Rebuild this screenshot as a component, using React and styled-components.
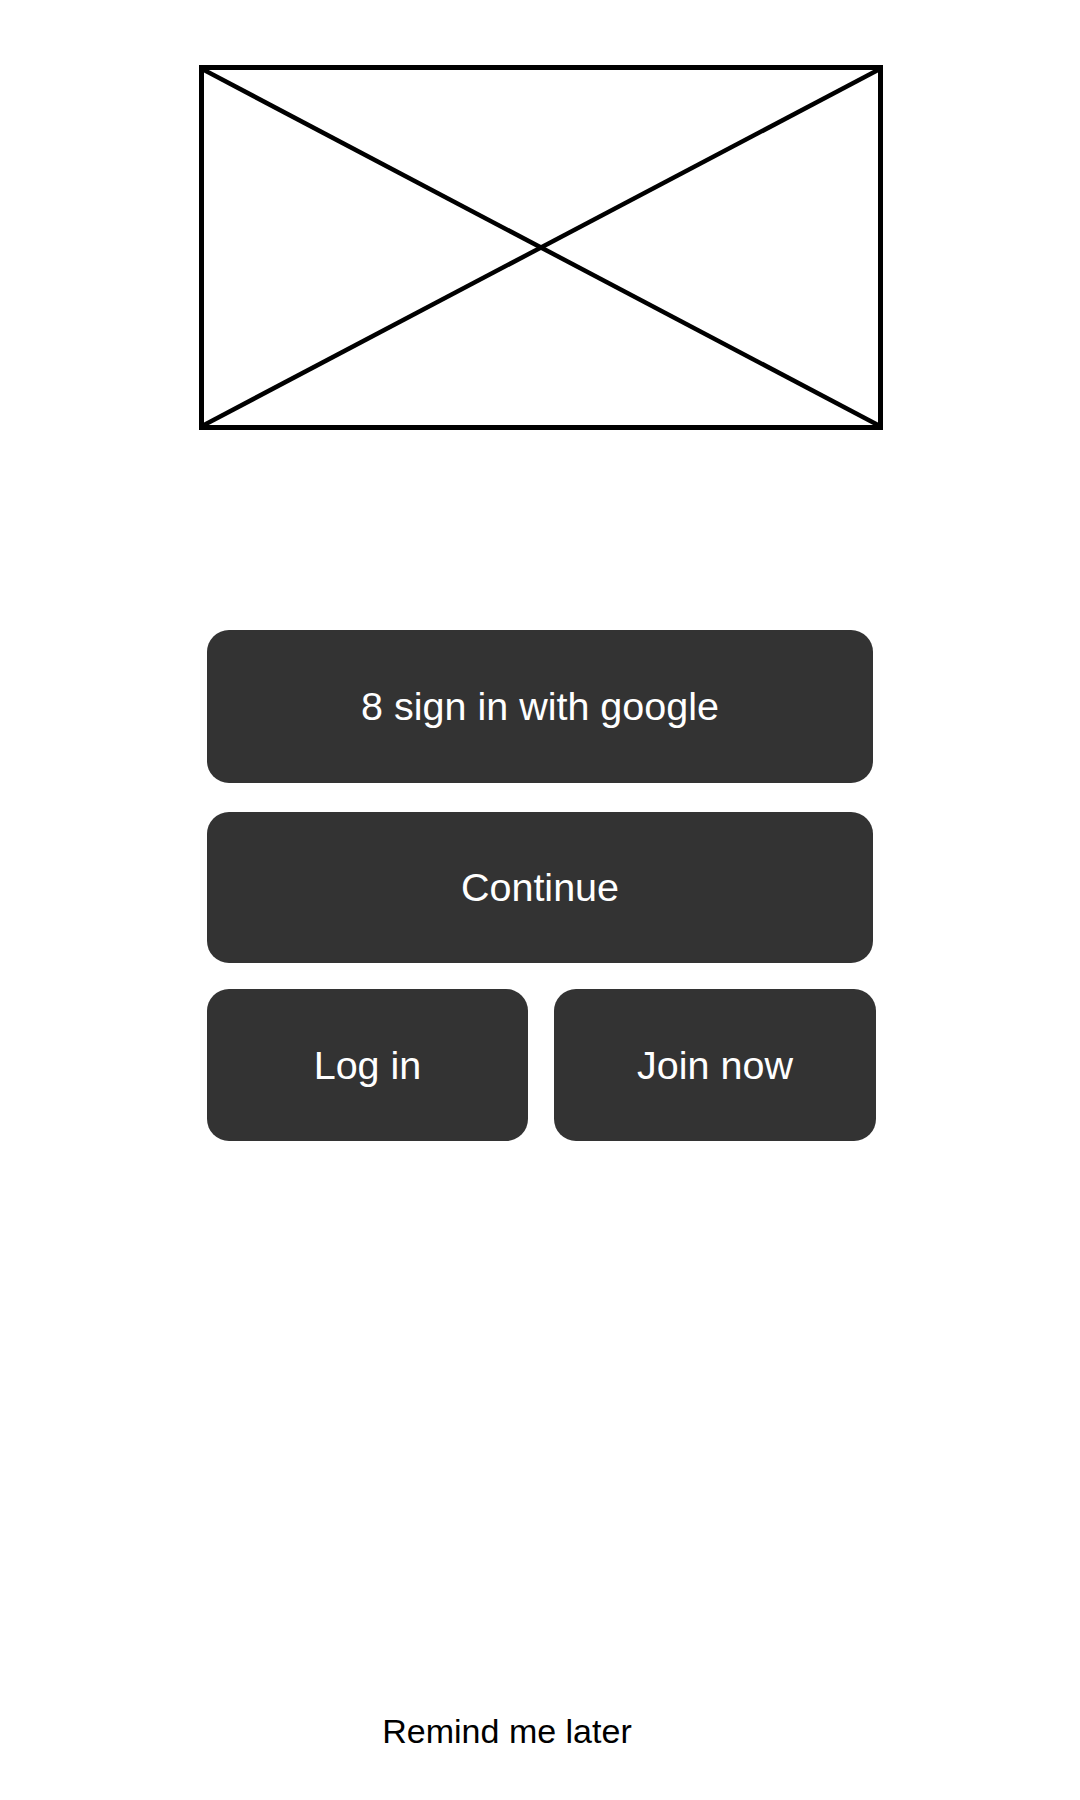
import React from 'react';
import styled, { createGlobalStyle } from 'styled-components';

const GlobalStyle = createGlobalStyle`
  html, body {
    margin: 0;
    padding: 0;
    background: #fff;
    font-family: "Liberation Sans", Arial, sans-serif;
  }
`;

const Page = styled.div`
  width: 1080px;
  height: 1800px;
  display: flex;
  flex-direction: column;
  align-items: center;
  box-sizing: border-box;
  padding-top: 65px;
`;

const Placeholder = styled.div`
  width: 684px;
  height: 365px;
  box-sizing: border-box;
  border: 5px solid #000;
  margin-left: 1px;

  svg {
    display: block;
    width: 100%;
    height: 100%;
  }
`;

const Actions = styled.div`
  margin-top: 200px;
  width: 666px;
  display: flex;
  flex-direction: column;
`;

const Button = styled.button`
  border: none;
  border-radius: 22px;
  background: #333333;
  color: #fff;
  font-family: "Liberation Sans", Arial, sans-serif;
  font-size: 39.5px;
  height: ${(p) => p.$h || 152}px;
  width: 100%;
  margin-top: ${(p) => p.$mt || 0}px;
  padding: 0;
  cursor: pointer;
`;

const Row = styled.div`
  display: grid;
  grid-template-columns: 321px 322px;
  column-gap: 26px;
  margin-top: 26px;
  margin-right: -3px;
`;

const Footer = styled.div`
  margin-top: auto;
  margin-bottom: 50px;
  width: 100%;
  display: flex;
  justify-content: center;
  padding-right: 66px;
  box-sizing: border-box;
`;

const RemindLink = styled.span`
  font-size: 34px;
  color: #000;
  line-height: 38px;
`;

export default function App() {
  return (
    <>
      <GlobalStyle />
      <Page>
        <Placeholder>
          <svg viewBox="0 0 100 100" preserveAspectRatio="none">
            <line x1="0" y1="0" x2="100" y2="100" stroke="#000" strokeWidth="4.5" vectorEffect="non-scaling-stroke" />
            <line x1="100" y1="0" x2="0" y2="100" stroke="#000" strokeWidth="4.5" vectorEffect="non-scaling-stroke" />
          </svg>
        </Placeholder>
        <Actions>
          <Button $h={153}>8 sign in with google</Button>
          <Button $h={151} $mt={29}>Continue</Button>
          <Row>
            <Button>Log in</Button>
            <Button>Join now</Button>
          </Row>
        </Actions>
        <Footer>
          <RemindLink>Remind me later</RemindLink>
        </Footer>
      </Page>
    </>
  );
}
